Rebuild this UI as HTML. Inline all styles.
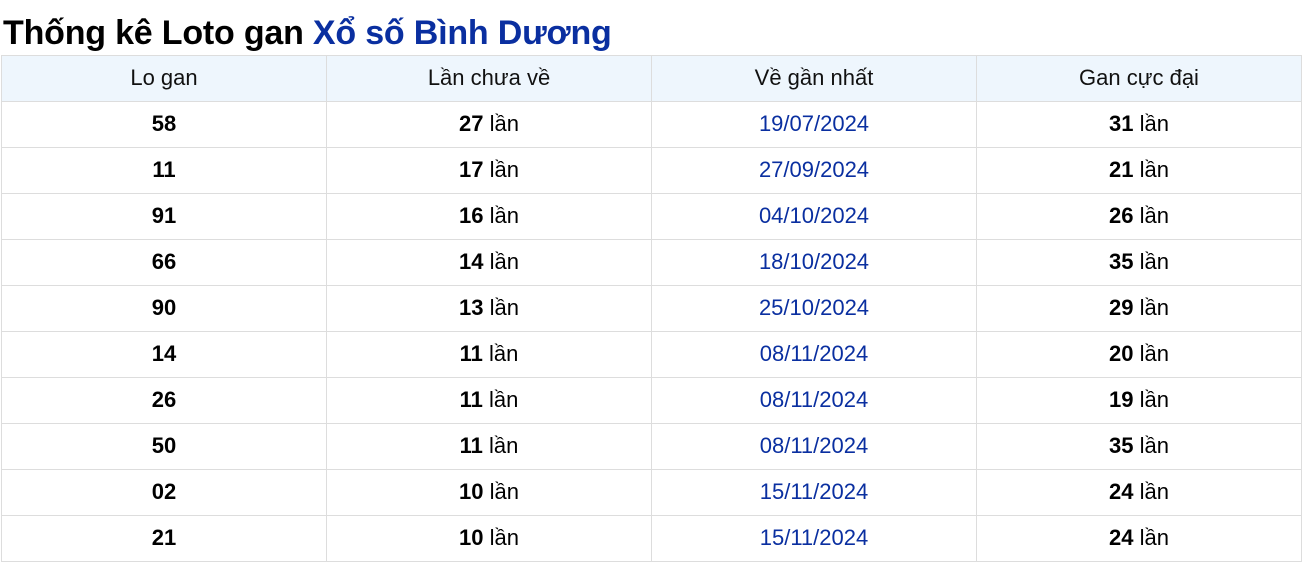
<!DOCTYPE html><html><head><meta charset="utf-8"><style>
body{margin:0;background:#fff;font-family:"Liberation Sans",Arial,sans-serif;}
h2{margin:0;position:absolute;left:3px;top:11px;font-size:34px;line-height:44px;font-weight:bold;color:#000;letter-spacing:-0.2px}
h2 span{color:#0a2fa0}
table{position:absolute;left:1px;top:55px;width:1301px;border-collapse:collapse;}
td,th{border:1px solid #ddd;height:45px;padding:0;text-align:center;font-size:22px;width:25%;line-height:22px}
td span,th span{position:relative;top:-1px}
th{background:#eef6fd;font-weight:normal;color:#111}
td.d{color:#0a2fa0}
</style></head><body>
<h2>Thống kê Loto gan <span>Xổ số Bình Dương</span></h2>
<table>
<tr><th><span>Lo gan</span></th><th><span>Lần chưa về</span></th><th><span>Về gần nhất</span></th><th><span>Gan cực đại</span></th></tr>
<tr><td><span><b>58</b></span></td><td><span><b>27</b> lần</span></td><td class="d"><span>19/07/2024</span></td><td><span><b>31</b> lần</span></td></tr>
<tr><td><span><b>11</b></span></td><td><span><b>17</b> lần</span></td><td class="d"><span>27/09/2024</span></td><td><span><b>21</b> lần</span></td></tr>
<tr><td><span><b>91</b></span></td><td><span><b>16</b> lần</span></td><td class="d"><span>04/10/2024</span></td><td><span><b>26</b> lần</span></td></tr>
<tr><td><span><b>66</b></span></td><td><span><b>14</b> lần</span></td><td class="d"><span>18/10/2024</span></td><td><span><b>35</b> lần</span></td></tr>
<tr><td><span><b>90</b></span></td><td><span><b>13</b> lần</span></td><td class="d"><span>25/10/2024</span></td><td><span><b>29</b> lần</span></td></tr>
<tr><td><span><b>14</b></span></td><td><span><b>11</b> lần</span></td><td class="d"><span>08/11/2024</span></td><td><span><b>20</b> lần</span></td></tr>
<tr><td><span><b>26</b></span></td><td><span><b>11</b> lần</span></td><td class="d"><span>08/11/2024</span></td><td><span><b>19</b> lần</span></td></tr>
<tr><td><span><b>50</b></span></td><td><span><b>11</b> lần</span></td><td class="d"><span>08/11/2024</span></td><td><span><b>35</b> lần</span></td></tr>
<tr><td><span><b>02</b></span></td><td><span><b>10</b> lần</span></td><td class="d"><span>15/11/2024</span></td><td><span><b>24</b> lần</span></td></tr>
<tr><td><span><b>21</b></span></td><td><span><b>10</b> lần</span></td><td class="d"><span>15/11/2024</span></td><td><span><b>24</b> lần</span></td></tr>
</table>
</body></html>
